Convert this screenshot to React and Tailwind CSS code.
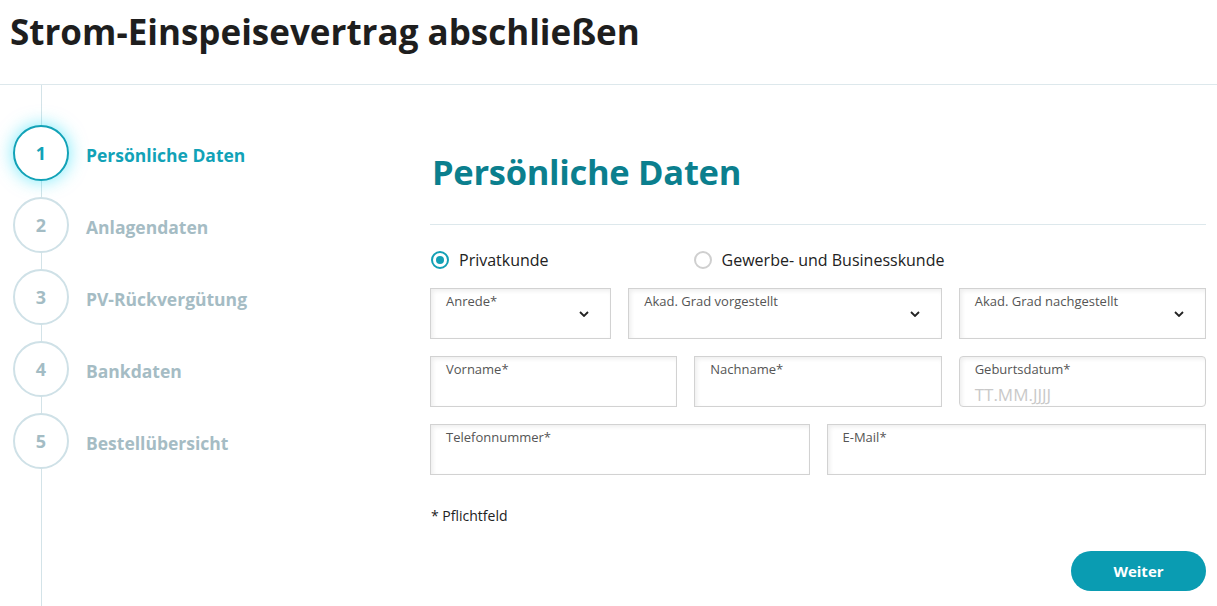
import React, { useState } from "react";

const steps = [
  { n: 1, label: "Persönliche Daten", active: true },
  { n: 2, label: "Anlagendaten" },
  { n: 3, label: "PV-Rückvergütung" },
  { n: 4, label: "Bankdaten" },
  { n: 5, label: "Bestellübersicht" },
];

const Chevron = () => (
  <svg width="10" height="6" viewBox="0 0 10 6" className="absolute right-[21px] top-[22px]">
    <path d="M1 1l4 4 4-4" fill="none" stroke="#222" strokeWidth="1.8" />
  </svg>
);

const Field = ({ label, span, select, placeholder, rounded }) => (
  <div
    className={`${span} relative h-[51px] border border-[#d2d2d2] bg-white shadow-[inset_2px_2px_4px_rgba(0,0,0,0.07)] px-[15px] pt-[4px] ${
      rounded ? "rounded-[4px]" : ""
    }`}
  >
    <div className="text-[13px] leading-[17px] text-[#555]">{label}</div>
    {placeholder && (
      <div className="text-[17px] leading-[22px] text-[#c9c9c9] mt-[6px]">{placeholder}</div>
    )}
    {select && <Chevron />}
  </div>
);

const Radio = ({ checked, label, onClick }) => (
  <button className="flex items-center gap-[10px]" onClick={onClick}>
    <span
      className={`w-[18px] h-[18px] rounded-full border-2 flex items-center justify-center ${
        checked ? "border-[#13a0b5]" : "border-[#cfcfcf]"
      }`}
    >
      {checked && <span className="w-[8px] h-[8px] rounded-full bg-[#13a0b5]" />}
    </span>
    <span className="text-[16px] text-[#222]">{label}</span>
  </button>
);

export default function App() {
  const [kind, setKind] = useState("privat");

  return (
    <div className="min-h-screen bg-white font-['Open_Sans',sans-serif] overflow-hidden h-[606px]">
      <header className="h-[85px] border-b border-[#dde8ec] px-[10px] pt-[7px]">
        <h1 className="text-[35px] leading-[50px] font-bold text-[#1e1e1e]">
          Strom-Einspeisevertrag abschließen
        </h1>
      </header>

      <div className="flex">
        <aside className="relative w-[430px] shrink-0 h-[521px]">
          <div className="absolute left-[41px] top-0 bottom-0 w-px bg-[#d3e3e8]" />
          <ol className="relative flex flex-col gap-[16px] pt-[40px] pl-[13px]">
            {steps.map((s) => (
              <li key={s.n} className="flex items-center gap-[17px]">
                <span
                  className={`w-[56px] h-[56px] rounded-full bg-white border-2 flex items-center justify-center pt-[1px] text-[18px] font-bold ${
                    s.active
                      ? "border-[#12a2b7] text-[#12a2b7] shadow-[0_0_18px_rgba(0,215,245,0.55)]"
                      : "border-[#cfe1e7] text-[#a3bcc4]"
                  }`}
                >
                  {s.n}
                </span>
                <span
                  className={`pt-[4px] text-[17.5px] font-bold ${
                    s.active ? "text-[#12a2b7]" : "text-[#a5bcc4]"
                  }`}
                >
                  {s.label}
                </span>
              </li>
            ))}
          </ol>
        </aside>

        <main className="w-[776px] pt-[65px]">
          <h2 className="text-[34.5px] leading-[44px] font-bold text-[#0b7f8e] pl-[2px] tracking-[-0.3px]">
            Persönliche Daten
          </h2>
          <div className="mt-[30px] border-t border-[#dde8ec]" />

          <div className="mt-[23px] flex gap-[145px] pl-[1px] h-[24px]">
            <Radio checked={kind === "privat"} label="Privatkunde" onClick={() => setKind("privat")} />
            <Radio
              checked={kind === "business"}
              label="Gewerbe- und Businesskunde"
              onClick={() => setKind("business")}
            />
          </div>

          <div className="mt-[16px] grid grid-cols-12 gap-x-[17px] gap-y-[17px]">
            <Field span="col-span-3" label="Anrede*" select />
            <Field span="col-span-5" label="Akad. Grad vorgestellt" select />
            <Field span="col-span-4" label="Akad. Grad nachgestellt" select />
            <Field span="col-span-4" label="Vorname*" />
            <Field span="col-span-4" label="Nachname*" />
            <Field span="col-span-4" label="Geburtsdatum*" placeholder="TT.MM.JJJJ" rounded />
            <Field span="col-span-6" label="Telefonnummer*" />
            <Field span="col-span-6" label="E-Mail*" />
          </div>

          <p className="mt-[31px] text-[14px] leading-[20px] text-[#222] pl-[1px]">* Pflichtfeld</p>

          <div className="mt-[25px] flex justify-end">
            <button className="w-[135px] h-[40px] rounded-full bg-[#0a9cb2] text-white text-[15px] font-bold">
              Weiter
            </button>
          </div>
        </main>
      </div>
    </div>
  );
}
